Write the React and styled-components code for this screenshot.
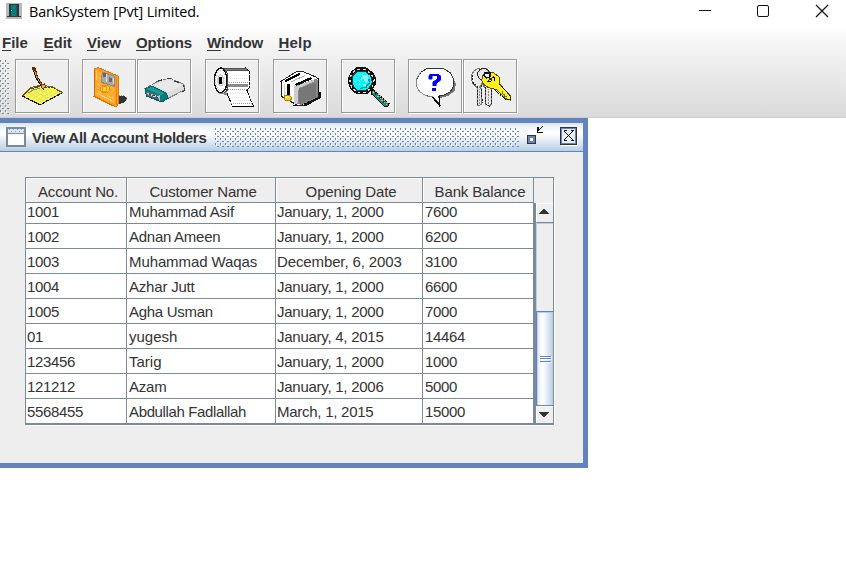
import React from "react";
import styled, { createGlobalStyle } from "styled-components";

const Global = createGlobalStyle`
  * { box-sizing: border-box; }
  body { margin: 0; background: #fff; overflow: hidden; font-family: "Liberation Sans", Arial, sans-serif; color: #333; }
  svg { display: block; flex: none; }
`;

const Page = styled.div`
  width: 846px;
  height: 587px;
  background: #fff;
  overflow: hidden;
`;
const TitleBar = styled.header`
  display: flex;
  align-items: center;
  height: 24px;
  padding: 0 17px 2px 6px;
`;
const AppTitle = styled.span`
  flex: 1;
  margin-left: 7px;
  padding-top: 2px;
  color: #000;
  font: 14.4px/20px "Open Sans", "Noto Sans", sans-serif;
  letter-spacing: -0.14px;
`;
const WindowControls = styled.div`
  display: flex;
  gap: 45px;
`;
const Chrome = styled.div`
  height: 94px;
  background: linear-gradient(#fff 0%, #f4f4f4 25%, #dadada 100%);
  border-bottom: 1px solid #ccc;
`;
const MenuBar = styled.nav`
  display: flex;
  height: 35px;
  padding: 9px 0 0 2px;
`;
const MenuItem = styled.span`
  width: ${(p) => p.$w}px;
  font-size: 15px;
  line-height: 20px;
  font-weight: bold;
  white-space: nowrap;
  letter-spacing: ${(p) => p.$track || 0}px;
  &::first-letter { text-decoration: underline; text-decoration-thickness: 1px; text-underline-offset: 2px; }
`;
const ToolBar = styled.div`
  display: flex;
  height: 57px;
`;
const ToolButton = styled.button`
  width: 54px;
  height: 54px;
  margin-left: ${(p) => p.$gap}px;
  padding: 0;
  border: 1px solid #999;
  background: #eee;
  box-shadow: 1px 1px 0 #fff, inset 1px 1px 0 #fff;
  & > svg { margin: -1px; }
`;
const GripBox = styled.div`
  width: 10px;
  height: 56px;
  padding-top: 1px;
`;

const Frame = styled.section`
  display: flex;
  flex-direction: column;
  width: 588px;
  height: 350px;
  border: 5px solid #6382bf;
  border-left: 0;
`;
const FrameTitle = styled.div`
  display: flex;
  align-items: center;
  height: 29px;
  flex: none;
  padding: 0 5px 0 6px;
  border-bottom: 1px solid #6382bf;
  background: linear-gradient(#dde8f3 0%, #fff 32%, #fff 38%, #b8cfe5 100%);
`;
const FrameName = styled.span`
  width: 183px;
  margin-left: 6px;
  padding-top: 1px;
  font-size: 15px;
  font-weight: bold;
  line-height: 20px;
  letter-spacing: -0.24px;
  white-space: nowrap;
`;
const FrameBody = styled.div`
  flex: 1;
  padding: 25px 0 0 25px;
  background: #eee;
`;
const ScrollPane = styled.div`
  display: flex;
  width: 529px;
  height: 248px;
  border: 1px solid #7a8a99;
  border-bottom-width: 2px;
  box-shadow: 1px 1px 0 #fff;
`;
const Table = styled.div`
  width: 508px;
`;
const Row = styled.div`
  display: grid;
  grid-template-columns: 101px 149px 147px 111px;
  grid-template-rows: 100%;
  height: ${(p) => p.$h || 25}px;
`;
const HeadCell = styled.div`
  border: solid #7a8a99;
  border-width: 0 1px 1px 0;
  background: #eee;
  box-shadow: inset 1px 1px 0 #fff;
  font-size: 15px;
  line-height: 20px;
  padding: 4px 0 0 4px;
  text-align: center;
  letter-spacing: -0.15px;
  white-space: nowrap;
`;
const Cell = styled.div`
  display: flex;
  align-items: flex-end;
  padding: 0 0 2px ${(p) => p.$pad}px;
  overflow: hidden;
  border: solid #7a8a99;
  border-width: 0 1px ${(p) => (p.$last ? 0 : 1)}px 0;
  background: #fff;
  font-size: 15px;
  line-height: 18px;
  white-space: nowrap;
  letter-spacing: ${(p) => p.$track}px;
`;
const Side = styled.div`
  display: flex;
  flex-direction: column;
  width: 19px;
`;
const Corner = styled.div`
  height: 25px;
`;
const ScrollBar = styled.div`
  display: flex;
  flex-direction: column;
  height: 220px;
  border-left: 2px solid #7a8a99;
`;
const Arrow = styled.div`
  display: flex;
  align-items: center;
  justify-content: center;
  height: ${(p) => p.$h}px;
  padding: 0 ${(p) => p.$shift || 0}px ${(p) => p.$lift || 0}px 0;
  background: #eee;
  box-shadow: inset 1px 1px 0 #fff;
`;
const Track = styled.div`
  height: 89px;
  border-top: 1px solid #7a8a99;
  border-left: 1px solid #b8cfe5;
  box-shadow: inset 0 1px 0 #b8cfe5;
`;
const Thumb = styled.div`
  display: flex;
  align-items: center;
  justify-content: flex-end;
  height: 95px;
  padding: 2px 1px 0 0;
  border: solid #6382bf;
  border-width: 1px 0 1px 1px;
  background: linear-gradient(90deg, #dde8f3 0%, #fff 30%, #fff 38%, #b8cfe5 100%);
  box-shadow: inset 1px 1px 0 #b8cfe5;
`;

const Dots = ({ id, w, h, color }) => (
  <svg width={w} height={h} shapeRendering="crispEdges">
    <defs>
      <pattern id={id} width="5" height="5" patternUnits="userSpaceOnUse">
        <path d="M0 0h1v2H0zM2 3h2v1H2z" fill={color} />
        <path d="M1 1h1v2H1zM4 4h1v1H4z" fill="#fff" />
      </pattern>
    </defs>
    <rect width={w} height={h} fill={`url(#${id})`} />
  </svg>
);

const DoorIcon = () => (
  <svg width="16" height="16" viewBox="0 0 16 16" shapeRendering="crispEdges">
    <path d="M0 0h16v16H0z" fill="#b9b9b9" />
    <path d="M3 1h10v12H3z" fill="#243b3d" />
    <path d="M5 2h5v11H5z" fill="#087d7d" />
    <path d="M10 2h2v11h-2z" fill="#126064" />
    <path d="M1 13h14v1H1zM11 1h1v12h-1z" fill="#363636" />
    <path d="M5 7h1v1H5z" fill="#c7eeee" />
  </svg>
);

const Glyph = ({ box, children }) => (
  <svg width="54" height="54" viewBox={box} shapeRendering="crispEdges" strokeWidth="3" fill="none">
    {children}
  </svg>
);

const NoteIcon = () => (
  <Glyph box="45 9 162 162">
    <path d="M67 120L94 94L123 87L158 93L187 109L120 147Z" fill="#f4f45c" stroke="#806020" />
    <path d="M78 117L120 94M87 123L132 96M98 128L149 98M109 134L163 102M119 139L174 106M94 99L143 127M109 94L157 120M82 108L130 134" stroke="#dde04a" strokeWidth="2" />
    <path d="M68 120L120 146L186 111" stroke="#111" strokeWidth="4" strokeDasharray="9 4" />
    <path d="M69 118L90 99L120 91" stroke="#833900" />
    <path d="M84 111L101 101L120 97" stroke="#6a9d85" />
    <path d="M135 93L158 95L184 108" stroke="#4e3a10" strokeDasharray="6 3" />
    <path d="M98 37L105 37L114 65L128 88L125 92L108 66Z" fill="#ee9b22" stroke="#111" />
    <path d="M98 35L104 36L107 46L99 42Z" fill="#5b2d00" stroke="#5b2d00" />
    <path d="M108 48L114 70M120 76L128 89" stroke="#8c4200" />
    <path d="M124 87L133 84L137 91L130 99L123 93Z" fill="#e8a86d" stroke="#713300" />
  </Glyph>
);
const FloppyIcon = () => (
  <Glyph box="246 9 162 162">
    <path d="M354 122L364 119L376 121L381 128L379 135L369 141L356 145Z" fill="#333" />
    <path d="M357 118H372M380 124V136" stroke="#999" strokeDasharray="3 3" />
    <path d="M284 38L295 35L356 61L354 147L347 153L282 121Z" fill="#ff9d20" stroke="#e07a08" />
    <path d="M288 41L346 66V146L286 118Z" fill="#ffab32" />
    <path d="M350 64V148" stroke="#e88415" />
    <path d="M284 39V121L345 151" stroke="#d56b00" strokeDasharray="12 3" />
    <path d="M289 44V71M292 112L341 137" stroke="#ffd169" />
    <path d="M307 48L344 61V91L304 79Z" fill="#aaa" stroke="#888" />
    <path d="M309 49L318 53V65L309 62ZM326 63L337 67V80L326 77Z" fill="#666" />
    <path d="M320 54V79M341 65V85" stroke="#ddd" />
    <ellipse cx="315" cy="99" rx="13" ry="12" fill="#ffd23b" stroke="#e28c09" />
    <path d="M308 92H320V105H308Z" stroke="#f29715" />
    <path d="M294 65L303 69M294 85L300 88M294 105L306 113M321 119L340 127" stroke="#ffca50" />
  </Glyph>
);
const DriveIcon = () => (
  <Glyph box="9 9 162 162">
    <path d="M33 98L71 76L107 66L151 86L153 101L84 136L41 121Z" fill="#ddd" stroke="#777" strokeDasharray="9 3" />
    <path d="M61 87L101 70L146 88L102 109Z" fill="#e8e8e8" />
    <path d="M72 76L84 71M99 68L112 68M122 75L134 79" stroke="#333" strokeWidth="4" />
    <path d="M34 99L55 90L97 111L102 127L83 138L37 120Z" fill="#087c7c" stroke="#046060" />
    <path d="M37 98L54 92L91 112L80 117Z" fill="#1b9c96" />
    <path d="M39 108L77 121L78 130L38 116Z" fill="#ccc" stroke="#667" />
    <path d="M45 113L71 124" stroke="#444" strokeWidth="4" strokeDasharray="7 4" />
    <path d="M77 118V136" stroke="#9cc" />
    <path d="M101 127L151 102" stroke="#999" strokeDasharray="6 3" />
    <path d="M148 88L153 102L143 109" stroke="#333" strokeDasharray="7 3" />
  </Glyph>
);
const PaperIcon = () => (
  <Glyph box="213 9 162 162">
    <path d="M272 37L335 36L346 47V94L339 104L358 151L295 150L279 112Z" fill="#fff" stroke="#111" strokeDasharray="9 2" />
    <path d="M271 36H334L340 41V44H278Z" fill="#777" stroke="#444" strokeWidth="2" />
    <path d="M281 85H341V93H279Z" fill="#8b8b8b" />
    <path d="M284 79H344M281 101H342M292 142H353" stroke="#999" strokeDasharray="3 3" />
    <path d="M253 112L277 109L280 116L262 115Z" fill="#888" />
    <path d="M294 57H341M289 68H341M290 113H338M293 123H342M300 133H348" stroke="#e5e5e5" strokeDasharray="3 3" />
    <ellipse cx="260" cy="73" rx="19" ry="37" fill="#fff" stroke="#111" strokeWidth="4" />
    <ellipse cx="259" cy="73" rx="14" ry="31" stroke="#ccc" strokeDasharray="3 3" />
    <ellipse cx="260" cy="73" rx="8" ry="16" stroke="#ccc" strokeWidth="4" />
    <path d="M256 63H264V84H256Z" fill="#000" />
    <path d="M271 40L279 51V104L271 109" stroke="#444" />
    <path d="M293 151H359V146" stroke="#000" strokeWidth="4" />
  </Glyph>
);
const ToasterIcon = () => (
  <Glyph box="15 9 162 162">
    <path d="M149 108H158V126L112 151L73 150Z" fill="#111" />
    <path d="M39 76L85 47L103 46L144 63L151 70V124L104 149L87 147L42 122Z" fill="#fff" stroke="#222" />
    <path d="M77 92L144 68L149 72V124L103 147L78 142Z" fill="#888" />
    <path d="M78 92L136 72L141 75L92 97L88 146L78 142Z" fill="#ccc" />
    <path d="M92 98L144 79V124L92 145Z" fill="#777" />
    <path d="M52 76L96 53M83 87L130 66" stroke="#000" strokeWidth="7" />
    <path d="M68 78L110 59" stroke="#aaa" />
    <path d="M62 83V116" stroke="#000" strokeWidth="8" />
    <path d="M48 84V118" stroke="#ccc" />
    <path d="M50 118H65L72 126L67 134L50 132Z" fill="#ffcc20" stroke="#b77900" />
    <path d="M53 121H63V127H52Z" fill="#fff36a" />
    <path d="M101 148L149 125M152 67V121" stroke="#000" strokeDasharray="6 3" />
  </Glyph>
);
const SearchIcon = () => (
  <Glyph box="219 9 162 162">
    <path d="M309 107L315 101L363 143L360 151L350 152L309 112Z" fill="#168a84" stroke="#000" />
    <path d="M315 107L356 148M323 106L359 141" stroke="#e0bd61" strokeDasharray="4 5" />
    <path d="M321 116L326 111M333 128L338 123M345 140L350 135" stroke="#035" strokeWidth="5" />
    <path d="M266 34H294L315 49L324 67V84L313 102L297 114H265L247 100L241 84V64L250 46Z" fill="#111" />
    <path d="M269 40H290L310 54L318 72L312 95L293 109H268L251 95L246 81V65L256 48Z" stroke="#ddd" strokeWidth="4" strokeDasharray="8 8" />
    <path d="M268 45H290L308 59L313 80L302 98L287 105L265 102L253 86L252 62Z" fill="#00f8ff" stroke="#333" />
    <path d="M284 57H300V75L294 82L287 70H278Z" fill="#7ffcff" />
    <path d="M303 68L304 80L294 94L276 97" stroke="#008b94" strokeWidth="4" />
    <path d="M263 67L271 59M273 76L282 67M264 86L280 83" stroke="#fff" strokeDasharray="4 4" />
    <path d="M271 55H284M258 77H266M285 87H295" stroke="#8effff" strokeWidth="4" />
  </Glyph>
);
const HelpIcon = () => (
  <Glyph box="24 9 162 162">
    <path d="M154 62L168 83L164 105L146 119L120 126V151L113 147V128Z" fill="#777" />
    <path d="M82 37H129L151 50L161 69V90L151 107L130 118L116 120L120 146L100 123L77 119L59 107L50 91V69L62 49Z" fill="#fff" stroke="#333" />
    <path d="M62 49L50 67V91L59 107L77 119L98 123" stroke="#888" />
    <path d="M86 67V59L91 54H115L122 60V73L109 83V89H98V78L111 69V59H97V69H87Z" fill="#0000f5" stroke="#0000f5" strokeWidth="1.5" />
    <path d="M97 96H109V106H97Z" fill="#0000f5" />
    <path d="M97 123L118 148V120" stroke="#000" strokeWidth="4" />
  </Glyph>
);
const KeysIcon = () => (
  <Glyph box="189 9 162 162">
    <path d="M214 57L223 44L234 37L248 41L258 37L270 49L267 87L274 99V145L268 151L257 145V99L246 83L240 91L246 104L244 145L232 150V95L217 82Z" fill="#e9e9e9" stroke="#777" />
    <path d="M238 90V144M265 98V145" stroke="#888" strokeDasharray="5 3" />
    <path d="M219 60V79L234 93" stroke="#fff" />
    <path d="M216 57L219 80L232 91V148M243 88L247 140M257 92V144L269 152M275 101V144" stroke="#222" strokeDasharray="6 4" />
    <ellipse cx="251" cy="55" rx="18" ry="18" stroke="#222" />
    <ellipse cx="251" cy="55" rx="14" ry="14" stroke="#ddd" />
    <path d="M245 73L250 55L263 49L281 51L297 62L298 83L331 120V132L319 129L291 102L264 94L250 85Z" fill="#ffed20" stroke="#555100" />
    <path d="M287 80L330 123" stroke="#fff768" />
    <path d="M279 97L316 130L332 132V123M297 84L330 118" stroke="#111" strokeDasharray="6 3" />
    <path d="M262 76L283 61M267 65L276 74" stroke="#222" />
    <path d="M253 51H270V62L260 66L252 60Z" fill="#e9e9e9" stroke="#111" strokeWidth="4" />
    <path d="M279 64H283V74M265 77H272" stroke="#000" />
    <path d="M306 104V112L314 116V122H322" stroke="#776b00" />
  </Glyph>
);

const MENUS = [["File", 41.5], ["Edit", 43.5], ["View", 49], ["Options", 71, -0.1], ["Window", 71.5, -0.25], ["Help", 40, 0.2]];
const TOOLS = [[5, NoteIcon], [13, FloppyIcon], [1, DriveIcon], [14, PaperIcon], [14, ToasterIcon], [14, SearchIcon], [13, HelpIcon], [1, KeysIcon]];
const HEADERS = ["Account No.", "Customer Name", "Opening Date", "Bank Balance"];
const ROWS = [
  ["1001", "Muhammad Asif", "January, 1, 2000", "7600"],
  ["1002", "Adnan Ameen", "January, 1, 2000", "6200"],
  ["1003", "Muhammad Waqas", "December, 6, 2003", "3100"],
  ["1004", "Azhar Jutt", "January, 1, 2000", "6600"],
  ["1005", "Agha Usman", "January, 1, 2000", "7000"],
  ["01", "yugesh", "January, 4, 2015", "14464"],
  ["123456", "Tarig", "January, 1, 2000", "1000"],
  ["121212", "Azam", "January, 1, 2006", "5000"],
  ["5568455", "Abdullah Fadlallah", "March, 1, 2015", "15000"],
];
const LAST = ROWS.length - 1;
const rowHeight = (i) => (i === 0 ? 21 : i === LAST ? 24 : 25);
const PADS = [1, 2, 1, 2];
const TRACKS = [-0.34, -0.2, -0.26, -0.34];
const TRACK_BY_TEXT = {
  "Muhammad Waqas": -0.1,
  "Adnan Ameen": -0.27,
  "Agha Usman": -0.28,
  yugesh: 0,
  Tarig: 0,
  "Abdullah Fadlallah": -0.36,
  "December, 6, 2003": -0.12,
};

export default function App() {
  return (
    <Page>
      <Global />
      <TitleBar>
        <DoorIcon />
        <AppTitle>BankSystem [Pvt] Limited.</AppTitle>
        <WindowControls>
          <svg width="14" height="14" fill="none" stroke="#111"><path d="M2 6.5H14" shapeRendering="crispEdges" /></svg>
          <svg width="14" height="14" fill="none" stroke="#111"><rect x="1.5" y="1.5" width="11" height="11" rx="1.5" /></svg>
          <svg width="14" height="14" fill="none" stroke="#111" strokeWidth="1.2"><path d="M1 1L13 13M13 1L1 13" /></svg>
        </WindowControls>
      </TitleBar>
      <Chrome>
        <MenuBar>{MENUS.map(([name, w, track]) => <MenuItem key={name} $w={w} $track={track}>{name}</MenuItem>)}</MenuBar>
        <ToolBar>
          <GripBox><Dots id="grip" w={10} h={55} color="#7a8a99" /></GripBox>
          {TOOLS.map(([gap, Icon], i) => <ToolButton key={i} $gap={gap}><Icon /></ToolButton>)}
        </ToolBar>
      </Chrome>
      <Frame>
        <FrameTitle>
          <svg width="20" height="20" shapeRendering="crispEdges">
            <rect x="1" y="1" width="18" height="18" fill="#fff" stroke="#7a8a99" strokeWidth="2" />
            <path d="M2 2h16v4H2z" fill="#dde8f3" />
            <path d="M3 2.5H18M5 4.5H18" stroke="#8298c9" strokeDasharray="1 3" />
            <path d="M1 6.5H19" stroke="#7a8a99" />
          </svg>
          <FrameName>View All Account Holders</FrameName>
          <Dots id="titlebumps" w={304} h={19} color="#6382bf" />
          <svg width="59" height="22" shapeRendering="crispEdges" fill="none">
            <path d="M8.5 9.5h8v8h-8z" stroke="#333" />
            <path d="M10.5 11.5h4v4h-4z" fill="#fff" stroke="#6382bf" />
            <path d="M9.5 10.5h6v6h-6z" stroke="#6382bf" />
            <path d="M18.5 1v5h5M19.5 1v4M19 5l5-5" stroke="#111" />
            <path d="M41.5 1.5h16v17h-16z" fill="#e6eef6" stroke="#333" />
            <path d="M42.5 2.5h14v15h-14z" stroke="#6382bf" />
            <path d="M45 5l9 9M54 5l-9 9M45 4.5h3M52 4.5h3M45 14.5h3M52 14.5h3" stroke="#111" />
            <path d="M58.5 2v17.5H42" stroke="#fff" />
          </svg>
        </FrameTitle>
        <FrameBody>
          <ScrollPane>
            <Table>
              <Row>{HEADERS.map((h) => <HeadCell key={h}>{h}</HeadCell>)}</Row>
              {ROWS.map((row, i) => (
                <Row key={row[0]} $h={rowHeight(i)}>
                  {row.map((text, c) => (
                    <Cell key={c} $pad={PADS[c]} $track={TRACK_BY_TEXT[text] ?? TRACKS[c]} $last={i === LAST}>{text}</Cell>
                  ))}
                </Row>
              ))}
            </Table>
            <Side>
              <Corner />
              <ScrollBar>
                <Arrow $h={19} $lift={2} $shift={1}><svg width="12" height="5" shapeRendering="crispEdges"><path d="M6 0L12 5H0z" fill="#333" /></svg></Arrow>
                <Track />
                <Thumb>
                  <svg width="12" height="7" shapeRendering="crispEdges">
                    <path d="M0 .5H11M0 2.5H11M0 5.5H11" stroke="#6382bf" />
                    <path d="M1 1.5H12M1 3.5H12M1 6.5H12" stroke="#fff" />
                  </svg>
                </Thumb>
                <Arrow $h={17} $shift={1}><svg width="12" height="5" shapeRendering="crispEdges"><path d="M0 0H12L6 5z" fill="#333" /></svg></Arrow>
              </ScrollBar>
            </Side>
          </ScrollPane>
        </FrameBody>
      </Frame>
    </Page>
  );
}
